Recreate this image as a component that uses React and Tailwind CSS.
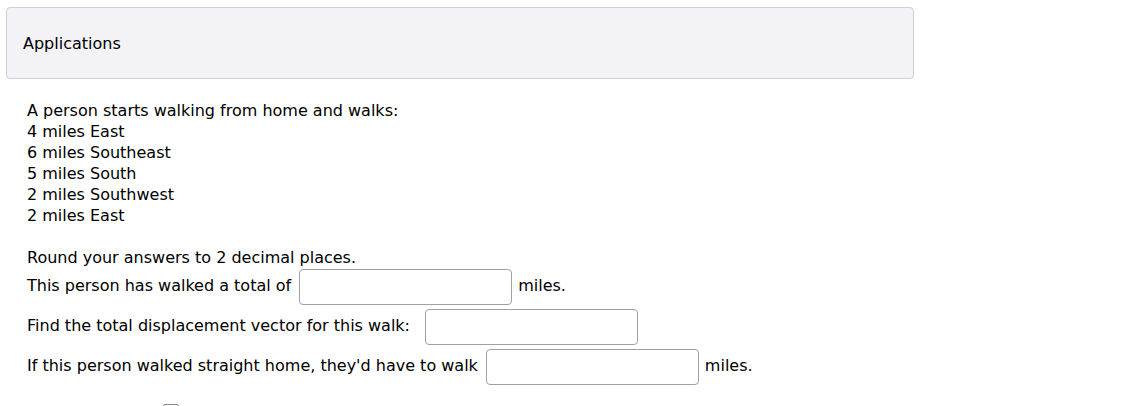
import React from "react";

const steps = [
  "4 miles East",
  "6 miles Southeast",
  "5 miles South",
  "2 miles Southwest",
  "2 miles East",
];

const AnswerBox = () => (
  <input
    type="text"
    className="w-[213px] h-[36px] border border-[#a0a0a0] rounded-[4px] bg-white px-2 outline-none"
  />
);

export default function App() {
  return (
    <div className="min-h-[406px] bg-white text-black text-[16px] leading-[21px] font-['DejaVu_Sans',sans-serif] overflow-hidden">
      <div className="ml-[6px] pt-[7px]">
        <div className="w-[908px] h-[72px] flex items-center px-[16px] bg-[#f2f2f7] border border-[#cfcfd4] rounded-[4px]">
          Applications
        </div>
      </div>

      <div className="pl-[27px] pt-[21px]">
        <div>A person starts walking from home and walks:</div>
        {steps.map((s) => (
          <div key={s}>{s}</div>
        ))}

        <div className="mt-[21px]">Round your answers to 2 decimal places.</div>

        <div className="flex items-center h-[40px] -mt-[1px]">
          <span className="mb-[3px]">This person has walked a total of</span>
          <span className="ml-[8px]">
            <AnswerBox />
          </span>
          <span className="ml-[6px] mb-[3px]">miles.</span>
        </div>
        <div className="flex items-center h-[40px]">
          <span className="mb-[3px]">Find the total displacement vector for this walk:</span>
          <span className="ml-[15px]">
            <AnswerBox />
          </span>
        </div>
        <div className="flex items-center h-[40px]">
          <span className="mb-[3px]">If this person walked straight home, they'd have to walk</span>
          <span className="ml-[8px]">
            <AnswerBox />
          </span>
          <span className="ml-[6px] mb-[3px]">miles.</span>
        </div>

        <div className="ml-[136px] mt-[17px] w-[16px] h-[16px] border border-[#888] rounded-[2px] bg-white" />
      </div>
    </div>
  );
}
